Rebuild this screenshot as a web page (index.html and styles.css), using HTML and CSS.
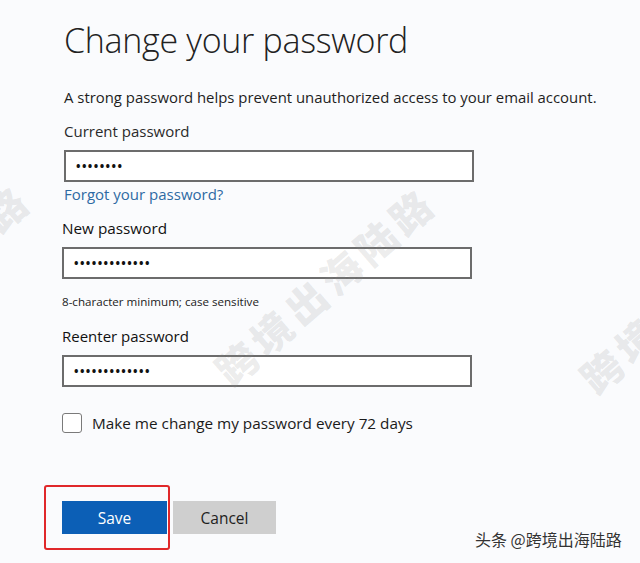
FILE: index.html
```html
<!DOCTYPE html>
<html lang="en">
<head>
<meta charset="utf-8">
<title>Change your password</title>
<link rel="stylesheet" href="styles.css">
</head>
<body>
<div class="page">
  <div class="top-group">
    <h1 class="title">Change your password</h1>
    <p class="intro">A strong password helps prevent unauthorized access to your email account.</p>
    <label class="label label-current">Current password</label>
    <div class="field field-current"><span class="dots">••••••••</span></div>
    <a class="link">Forgot your password?</a>
  </div>
  <div class="bottom-group">
    <label class="label label-new">New password</label>
    <div class="field"><span class="dots">•••••••••••••</span></div>
    <p class="hint">8-character minimum; case sensitive</p>
    <label class="label label-reenter">Reenter password</label>
    <div class="field"><span class="dots">•••••••••••••</span></div>
    <div class="check-row">
      <span class="checkbox"></span>
      <span class="check-label">Make me change my password every 72 days</span>
    </div>
    <div class="actions">
      <span class="save-wrap">
        <button class="btn btn-save">Save</button>
        <span class="highlight"></span>
      </span>
      <button class="btn btn-cancel">Cancel</button>
    </div>
  </div>

  <div class="wm wm-left">跨境出海陆路</div>
  <div class="wm wm-center">跨境出海陆路</div>
  <div class="wm wm-right">跨境出海陆路</div>
  <div class="credit">头条 @跨境出海陆路</div>
</div>
</body>
</html>
```

FILE: styles.css
```css
html, body {
  margin: 0;
  padding: 0;
}
body {
  background: #fafbfd;
  font-family: "Open Sans", "Noto Sans", sans-serif;
  color: #1e1e1e;
}
.page {
  position: relative;
  width: 640px;
  height: 563px;
  overflow: hidden;
  padding-left: 62px;
  box-sizing: border-box;
}
.top-group {
  margin-left: 2px;
  display: flex;
  flex-direction: column;
  align-items: flex-start;
}
.title {
  margin: 20px 0 0 0;
  font-size: 34px;
  line-height: 40px;
  font-weight: 300;
  color: #222;
  letter-spacing: -0.3px;
}
.intro {
  margin: 27px 0 0 0;
  font-size: 14.9px;
  line-height: 20px;
  color: #1e1e1e;
}
.label {
  display: block;
  font-size: 15px;
  line-height: 20px;
  color: #1e1e1e;
}
.label-current {
  margin-top: 14px;
  color: #2a2a2a;
}
.field {
  width: 410px;
  height: 32px;
  box-sizing: border-box;
  border: 2px solid #6c6c6c;
  background: #fff;
  display: flex;
  align-items: center;
  padding-left: 10px;
  margin-top: 9px;
}
.dots {
  font-size: 12px;
  letter-spacing: 1.4px;
  color: #111;
  font-weight: 700;
}
.link {
  margin-top: 2px;
  font-size: 15px;
  line-height: 20px;
  color: #2e6aa3;
}
.bottom-group {
  display: flex;
  flex-direction: column;
  align-items: flex-start;
}
.label-new {
  margin-top: 14px;
  font-size: 15.3px;
  color: #111;
}
.hint {
  margin: 16px 0 0 0;
  font-size: 11.6px;
  line-height: 14px;
  color: #222;
}
.label-reenter {
  margin-top: 17px;
  font-size: 15px;
  color: #111;
}
.check-row {
  margin-top: 26px;
  display: flex;
  align-items: center;
  gap: 10px;
}
.checkbox {
  width: 20px;
  height: 20px;
  box-sizing: border-box;
  border: 1.5px solid #7a7a7a;
  border-radius: 3px;
  background: #fff;
}
.check-label {
  font-size: 15.3px;
  line-height: 20px;
  color: #1a1a1a;
}
.actions {
  margin-top: 68px;
  display: flex;
  gap: 6px;
}
.save-wrap {
  position: relative;
  display: block;
}
.btn {
  border: none;
  height: 33px;
  font-family: "Open Sans", "Noto Sans", sans-serif;
  font-size: 15.5px;
  padding: 0;
  display: block;
}
.btn-save {
  width: 105px;
  background: #0c5fb6;
  color: #fff;
}
.btn-cancel {
  width: 103px;
  background: #cfcfcf;
  color: #1e1e1e;
}
.highlight {
  position: absolute;
  left: -18px;
  top: -16px;
  width: 126px;
  height: 65px;
  box-sizing: border-box;
  border: 2px solid #e0282a;
  border-radius: 3px;
}
.wm {
  position: absolute;
  font-family: "Noto Sans CJK SC", sans-serif;
  font-weight: 900;
  font-size: 40px;
  letter-spacing: 6px;
  color: rgba(140, 140, 140, 0.18);
  white-space: nowrap;
  transform: translate(-50%, -50%) rotate(-41deg);
  pointer-events: none;
}
.wm-center {
  left: 325px;
  top: 285px;
}
.wm-left {
  left: -80px;
  top: 282px;
}
.wm-right {
  left: 690px;
  top: 293px;
}
.credit {
  position: absolute;
  left: 475px;
  top: 528px;
  font-family: "Noto Sans CJK SC", sans-serif;
  font-size: 16px;
  line-height: 22px;
  color: #333;
  text-shadow: 0 0 2px #fff, 0 0 1px #fff;
  white-space: nowrap;
}
```
